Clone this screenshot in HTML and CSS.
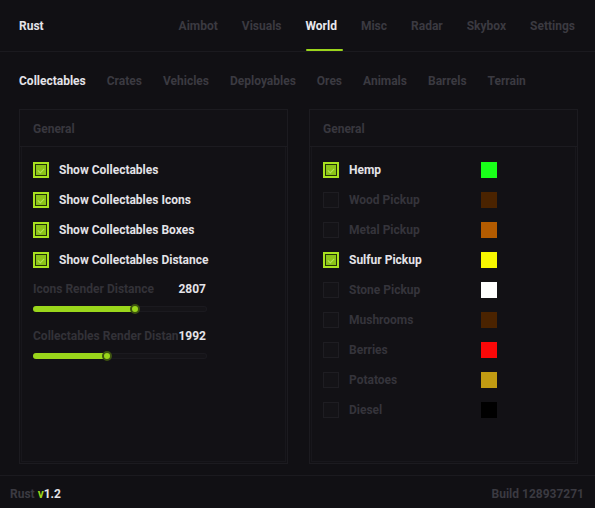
FILE: index.html
```html
<!DOCTYPE html>
<html lang="en">
<head>
    <meta charset="UTF-8">
    <meta name="viewport" content="width=device-width, initial-scale=1.0">
    <title>Rust</title>
    <link rel="stylesheet" href="styles.css">
</head>
<body>
    <div class="app">
        <div class="header">
            <div class="brand">Rust</div>
            <div class="nav">
                <div class="nav-item">Aimbot</div>
                <div class="nav-item">Visuals</div>
                <div class="nav-item active">World</div>
                <div class="nav-item">Misc</div>
                <div class="nav-item">Radar</div>
                <div class="nav-item">Skybox</div>
                <div class="nav-item">Settings</div>
            </div>
        </div>

        <div class="subnav">
            <div class="sub-item active">Collectables</div>
            <div class="sub-item">Crates</div>
            <div class="sub-item">Vehicles</div>
            <div class="sub-item">Deployables</div>
            <div class="sub-item">Ores</div>
            <div class="sub-item">Animals</div>
            <div class="sub-item">Barrels</div>
            <div class="sub-item">Terrain</div>
        </div>

        <div class="panels">
            <div class="panel">
                <div class="panel-title">General</div>
                <div class="panel-body">
                    <div class="row on"><span class="check"></span><span class="label">Show Collectables</span></div>
                    <div class="row on"><span class="check"></span><span class="label">Show Collectables Icons</span></div>
                    <div class="row on"><span class="check"></span><span class="label">Show Collectables Boxes</span></div>
                    <div class="row on"><span class="check"></span><span class="label">Show Collectables Distance</span></div>

                    <div class="slider">
                        <div class="slider-head"><span class="slider-label">Icons Render Distance</span><span class="slider-value">2807</span></div>
                        <div class="track"><div class="fill" style="width: 59%"></div></div>
                    </div>
                    <div class="slider">
                        <div class="slider-head"><span class="slider-label">Collectables Render Distance</span><span class="slider-value">1992</span></div>
                        <div class="track"><div class="fill" style="width: 43%"></div></div>
                    </div>
                </div>
            </div>

            <div class="panel">
                <div class="panel-title">General</div>
                <div class="panel-body">
                    <div class="row on"><span class="check"></span><span class="label wide">Hemp</span><span class="swatch" style="background: #19ff19"></span></div>
                    <div class="row"><span class="check"></span><span class="label wide">Wood Pickup</span><span class="swatch" style="background: #4a2300"></span></div>
                    <div class="row"><span class="check"></span><span class="label wide">Metal Pickup</span><span class="swatch" style="background: #b35b00"></span></div>
                    <div class="row on"><span class="check"></span><span class="label wide">Sulfur Pickup</span><span class="swatch" style="background: #f7f700"></span></div>
                    <div class="row"><span class="check"></span><span class="label wide">Stone Pickup</span><span class="swatch" style="background: #ffffff"></span></div>
                    <div class="row"><span class="check"></span><span class="label wide">Mushrooms</span><span class="swatch" style="background: #4a2300"></span></div>
                    <div class="row"><span class="check"></span><span class="label wide">Berries</span><span class="swatch" style="background: #fa0808"></span></div>
                    <div class="row"><span class="check"></span><span class="label wide">Potatoes</span><span class="swatch" style="background: #c19b12"></span></div>
                    <div class="row"><span class="check"></span><span class="label wide">Diesel</span><span class="swatch" style="background: #000000"></span></div>
                </div>
            </div>
        </div>

        <div class="footer">
            <div class="version">Rust <span class="v">v</span><span class="num">1.2</span></div>
            <div class="build">Build 128937271</div>
        </div>
    </div>
</body>
</html>
```

FILE: styles.css
```css
body {
    margin: 0;
    background-color: #111014;
    font-family: Roboto, "Liberation Sans", sans-serif;
    font-size: 12px;
    font-weight: 700;
    color: #3b3a41;
}
.app {
    width: 595px;
    height: 508px;
    display: flex;
    flex-direction: column;
    overflow: hidden;
}
.header {
    height: 51px;
    display: flex;
    align-items: stretch;
    justify-content: space-between;
    padding: 0 20px 0 19px;
    border-bottom: 1px solid #1b1a1f;
}
.brand {
    display: flex;
    align-items: center;
    color: #e4e3e8;
}
.nav {
    display: flex;
    gap: 24px;
}
.nav-item {
    position: relative;
    display: flex;
    align-items: center;
}
.nav-item.active {
    color: #e8e7ec;
}
.nav-item.active::after {
    content: "";
    position: absolute;
    left: 0;
    bottom: 0;
    width: calc(100% + 6px);
    height: 2px;
    background-color: #9bd51c;
    border-radius: 1px;
}
.subnav {
    display: flex;
    gap: 21px;
    padding: 22px 19px 0;
    height: 35px;
    line-height: 14px;
}
.sub-item.active {
    color: #e4e3e8;
}
.panels {
    display: grid;
    grid-template-columns: 1fr 1fr;
    gap: 21px;
    padding: 0 17px 0 19px;
    height: 355px;
}
.panel {
    border: 1px solid #1c1b20;
    background-color: #121115;
    display: flex;
    flex-direction: column;
}
.panel-title {
    height: 36px;
    line-height: 38px;
    padding-left: 13px;
    border-bottom: 1px solid #1c1b20;
    color: #38373e;
}
.panel-body {
    flex: 1;
    padding: 8px 11px 0;
    margin: 0 1px 1px;
    border: 1px solid #18171c;
    border-top: none;
}
.row {
    height: 30px;
    display: flex;
    align-items: center;
}
.check {
    width: 16px;
    height: 16px;
    box-sizing: border-box;
    border: 1px solid #1e1d22;
    background-color: #141317;
    margin-right: 10px;
    flex: none;
}
.row.on .check {
    border: 2px solid #a9e31f;
    background-color: #8cc418;
    box-shadow: inset 0 0 0 1px #24330a;
    position: relative;
}
.row.on .check::after {
    content: "";
    position: absolute;
    left: 4px;
    top: 3px;
    width: 3px;
    height: 5px;
    border: solid #b3e356;
    border-width: 0 1px 1px 0;
    transform: rotate(45deg);
}
.label {
    color: #35343b;
}
.row.on .label {
    color: #e4e3e8;
}
.label.wide {
    width: 132px;
}
.swatch {
    width: 16px;
    height: 16px;
}
.slider {
    width: 174px;
    margin-top: 7px;
}
.slider + .slider {
    margin-top: 17px;
}
.slider-head {
    display: flex;
    height: 14px;
    line-height: 14px;
}
.slider-label {
    flex: 1;
    overflow: hidden;
    white-space: nowrap;
    color: #333238;
}
.slider-value {
    flex: none;
    color: #e4e3e8;
    margin-right: 1px;
}
.track {
    margin-top: 10px;
    height: 6px;
    border-radius: 3px;
    background-color: #151418;
    box-shadow: inset 0 0 0 1px #1b1a1f;
}
.fill {
    position: relative;
    height: 100%;
    border-radius: 3px;
    background-color: #9ad61b;
}
.fill::after {
    content: "";
    position: absolute;
    right: -4px;
    top: -2px;
    width: 6px;
    height: 6px;
    border-radius: 50%;
    background-color: #9ad61b;
    border: 2px solid #3d5310;
}
.footer {
    margin-top: 11px;
    border-top: 1px solid #1b1a1f;
    flex: 1;
    display: flex;
    align-items: center;
    justify-content: space-between;
    padding: 3px 11px 0 10px;
}
.version .v {
    color: #9ad61b;
}
.version .num {
    color: #e4e3e8;
}
```
